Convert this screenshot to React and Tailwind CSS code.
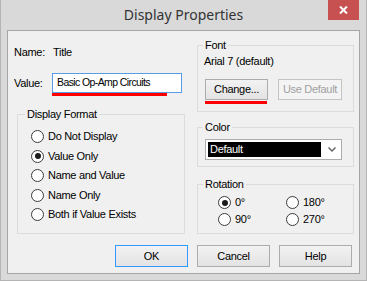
import React from "react";

const Radio = ({ checked }) => (
  <span className="w-[13px] h-[13px] rounded-full border border-[#3c3c3c] bg-white flex items-center justify-center shrink-0">
    {checked && <span className="w-[6px] h-[6px] rounded-full bg-[#1b1b1b]" />}
  </span>
);

const RadioRow = ({ checked, label }) => (
  <div className="flex items-center gap-[4px] h-[13px]">
    <Radio checked={checked} />
    <span className="leading-[13px]">{label}</span>
  </div>
);

const Btn = ({ children, primary, disabled, className = "" }) => (
  <div
    className={`flex items-center justify-center border bg-linear-to-b from-[#f2f2f2] to-[#e3e3e3] ${
      primary ? "border-[#3399ff]" : disabled ? "border-[#c4c4c4] from-[#f4f4f4] to-[#f4f4f4]" : "border-[#acacac]"
    } ${disabled ? "text-[#a0a0a0]" : "text-black"} ${className}`}
  >
    {children}
  </div>
);

const Group = ({ title, legendClass = "ml-[5px]", className = "", children }) => (
  <fieldset className={`border border-[#dcdcdc] ${className}`}>
    <legend className={`px-[2px] leading-[13px] ${legendClass}`}>{title}</legend>
    {children}
  </fieldset>
);

export default function App() {
  return (
    <div className="w-[367px] h-[281px] bg-[#d9d9d9] border border-t-0 border-[#b4b4b4] flex flex-col font-['Liberation_Sans',Arial,sans-serif] text-[11px] tracking-[-0.3px] text-black">
      {/* title bar */}
      <div className="h-[30px] grid grid-cols-[38px_1fr_38px] shrink-0">
        <div />
        <div className="flex items-center justify-center pb-[2px] font-['Noto_Sans',sans-serif] text-[14px] tracking-normal text-[#333]">
          Display Properties
        </div>
        <div className="flex justify-start">
          <div className="w-[31px] h-[20px] bg-[#c75050] flex items-center justify-center">
            <svg width="9" height="8" viewBox="0 0 9 8">
              <path d="M1 0.5 L8 7.5 M8 0.5 L1 7.5" stroke="white" strokeWidth="2" />
            </svg>
          </div>
        </div>
      </div>

      {/* client */}
      <div className="mx-[6px] h-[244px] border border-[#a5a5a5] bg-[#f0f0f0] flex flex-col">
        <div className="flex">
          {/* left column */}
          <div className="w-[177px] flex flex-col">
            <div className="mt-[15px] pl-[6px] flex h-[13px] items-center">
              <span className="w-[39px]">Name:</span>
              <span>Title</span>
            </div>
            <div className="mt-[14px] pl-[6px] flex items-center">
              <span className="w-[38px]">Value:</span>
              <div className="w-[130px] h-[20px] border border-[#569de5] bg-white flex items-center pl-[4px] text-[10.5px] tracking-[-0.6px]">
                Basic Op-Amp Circuits
              </div>
            </div>
            <div className="ml-[44px] w-[115px] h-[3px] bg-[#ff0000]" />
            <Group title="Display Format" legendClass="ml-[7px]" className="mt-[12px] ml-[9px] w-[168px] h-[126px]">
              <div className="pt-[9px] pl-[13px] flex flex-col gap-[6.5px]">
                <RadioRow label="Do Not Display" />
                <RadioRow checked label="Value Only" />
                <RadioRow label="Name and Value" />
                <RadioRow label="Name Only" />
                <RadioRow label="Both if Value Exists" />
              </div>
            </Group>
          </div>

          {/* right column */}
          <div className="ml-[12px] w-[157px] flex flex-col">
            <Group title="Font" className="mt-[8px] h-[73px]">
              <div className="pl-[6px] pt-[3px] leading-[13px]">Arial 7 (default)</div>
              <div className="pl-[7px] mt-[11px] flex gap-[10px]">
                <div className="flex flex-col">
                  <Btn className="w-[63px] h-[21px]">Change...</Btn>
                  <div className="mt-[1px] w-[62px] h-[3px] bg-[#ff0000]" />
                </div>
                <Btn disabled className="w-[64px] h-[21px]">Use Default</Btn>
              </div>
            </Group>
            <Group title="Color" className="mt-[9px] h-[46px]">
              <div className="pl-[7px] pt-[5px]">
                <div className="w-[137px] h-[21px] border border-[#acacac] bg-white flex items-center p-[2px]">
                  <div className="w-[113px] h-full bg-black text-white flex items-center pl-[2px]">Default</div>
                  <div className="flex-1 flex items-center justify-center pl-[4px]">
                    <svg width="8" height="5" viewBox="0 0 8 5">
                      <path d="M0.5 0.5 L4 4 L7.5 0.5" stroke="#606060" strokeWidth="1.4" fill="none" />
                    </svg>
                  </div>
                </div>
              </div>
            </Group>
            <Group title="Rotation" className="mt-[11px] h-[56px]">
              <div className="pt-[5px] pl-[20px] grid grid-cols-[68px_1fr] gap-y-[4px]">
                <RadioRow checked label="0°" />
                <RadioRow label="180°" />
                <RadioRow label="90°" />
                <RadioRow label="270°" />
              </div>
            </Group>
          </div>
        </div>

        {/* buttons */}
        <div className="mt-[11px] pr-[7px] flex justify-end gap-[9px]">
          <Btn primary className="w-[73px] h-[22px]">OK</Btn>
          <Btn className="w-[73px] h-[22px]">Cancel</Btn>
          <Btn className="w-[73px] h-[22px]">Help</Btn>
        </div>
      </div>
    </div>
  );
}
